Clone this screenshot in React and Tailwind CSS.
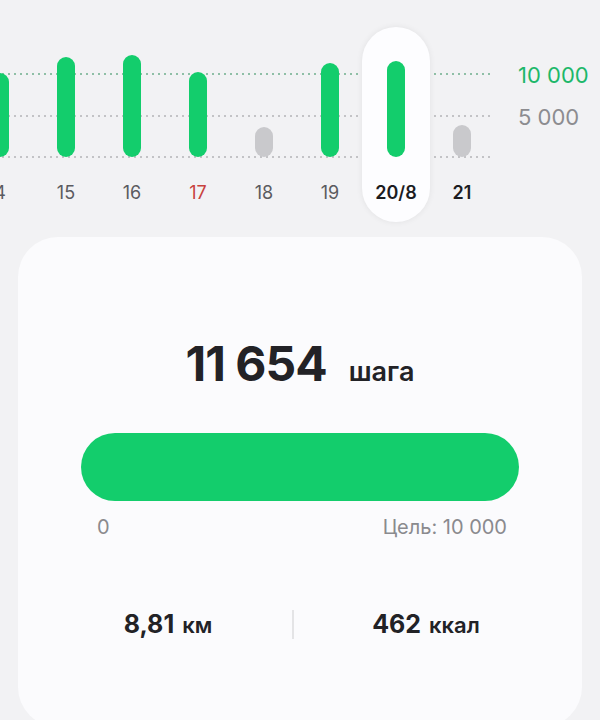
import React from "react";

const days = [
  { label: "4", h: 84, color: "green", text: "text-[#5b5b60]" },
  { label: "15", h: 100, color: "green", text: "text-[#5b5b60]" },
  { label: "16", h: 102, color: "green", text: "text-[#5b5b60]" },
  { label: "17", h: 85, color: "green", text: "text-[#c8423e]" },
  { label: "18", h: 30, color: "grey", text: "text-[#5b5b60]" },
  { label: "19", h: 94, color: "green", text: "text-[#5b5b60]" },
  { label: "20/8", h: 96, color: "green", text: "text-[#1c1c1f] font-semibold", active: true },
  { label: "21", h: 32, color: "grey", text: "text-[#1c1c1f] font-semibold" },
];

function Column({ d }) {
  return (
    <div className="w-[66px] shrink-0 flex justify-center">
      <div
        className={
          "w-[68px] shrink-0 h-[195px] flex flex-col items-center rounded-full " +
          (d.active ? "bg-[#fdfdff] shadow-[0_0_6px_rgba(0,0,0,0.07)]" : "")
        }
      >
        <div className="h-[130px] w-full flex items-end justify-center">
          <div
            className={
              "w-[18px] rounded-full " +
              (d.color === "green" ? "bg-[#13cd6c]" : "bg-[#c9c9cc]")
            }
            style={{ height: d.h }}
          />
        </div>
        <div className={"pt-[25px] text-[18px] leading-[22px] " + d.text}>{d.label}</div>
      </div>
    </div>
  );
}

export default function App() {
  return (
    <div className="h-[720px] overflow-hidden bg-[#f2f2f4] font-['Inter','Noto_Sans',sans-serif]">
      <div className="relative pt-[27px]">
        <div className="absolute left-0 top-[73px] w-[492px] h-[2px] bg-[radial-gradient(circle,#8fbfa6_1px,transparent_1.3px)] bg-[length:6px_2px]" />
        <div className="absolute left-0 top-[115px] w-[492px] h-[2px] bg-[radial-gradient(circle,#c3c3c6_1px,transparent_1.3px)] bg-[length:6px_2px]" />
        <div className="absolute left-0 top-[156px] w-[492px] h-[2px] bg-[radial-gradient(circle,#c3c3c6_1px,transparent_1.3px)] bg-[length:6px_2px]" />
        <div className="relative flex -ml-[33px]">
          {days.map((d) => (
            <Column key={d.label} d={d} />
          ))}
          <div className="ml-[23px] pt-[34px] flex flex-col text-[22px] leading-[28px] whitespace-nowrap">
            <span className="text-[#1db86a]">10 000</span>
            <span className="mt-[14px] text-[#8c8c90]">5 000</span>
          </div>
        </div>
      </div>

      <div className="mx-[18px] mt-[15px] h-[490px] rounded-[40px] bg-[#fbfbfd] pt-[103px]">
        <div className="flex items-baseline justify-center text-[#222226]">
          <span className="text-[48px] leading-[48px] font-bold tracking-[-1px]">11 654</span>
          <span className="ml-[22px] text-[27px] leading-none font-semibold">шага</span>
        </div>

        <div className="mx-[63px] mt-[45px]">
          <div className="h-[68px] rounded-full bg-[#13cd6c]" />
          <div className="mt-[14px] pl-[16px] pr-[12px] flex justify-between text-[20px] leading-[24px] text-[#8a8a8e]">
            <span>0</span>
            <span>Цель: 10 000</span>
          </div>
        </div>

        <div className="mt-[70px] pl-[26px] flex items-center text-[#222226]">
          <div className="w-[248px] flex justify-center items-baseline">
            <span className="text-[25px] leading-[30px] font-bold">8,81</span>
            <span className="ml-[8px] text-[22px] leading-none font-semibold">км</span>
          </div>
          <div className="w-[2px] h-[29px] bg-[#e4e4e6]" />
          <div className="w-[264px] flex justify-center items-baseline">
            <span className="text-[25px] leading-[30px] font-bold">462</span>
            <span className="ml-[8px] text-[22px] leading-none font-semibold">ккал</span>
          </div>
        </div>
      </div>
    </div>
  );
}
